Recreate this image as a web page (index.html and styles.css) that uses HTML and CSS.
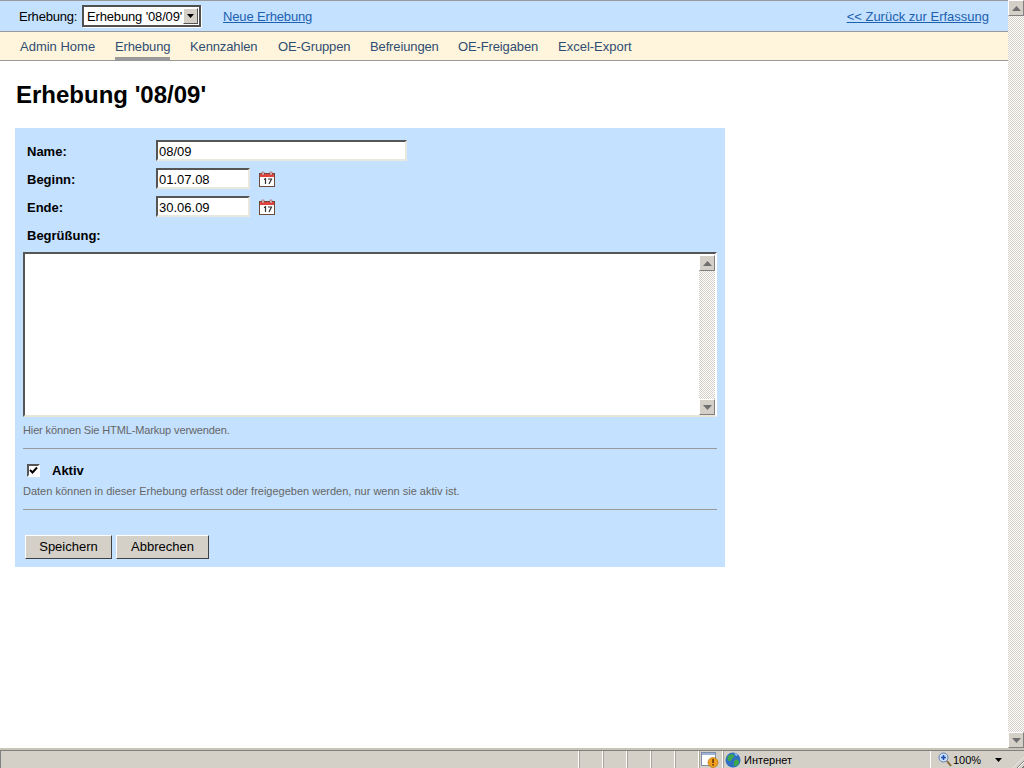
FILE: index.html
```html
<!DOCTYPE html>
<html lang="de">
<head>
<meta charset="utf-8">
<title>Erhebung</title>
<link rel="stylesheet" href="styles.css">
</head>
<body>
<div class="window">
  <div class="viewport">
    <main class="page">
      <div class="topbar">
        <span class="topbar-label">Erhebung:</span>
        <div class="select"><span class="select-text">Erhebung '08/09'</span><span class="select-btn"><svg width="8" height="4" viewBox="0 0 8 4"><path d="M0 0h7L3.500 4z" fill="#000"/></svg></span></div>
        <a class="link new-link" href="#">Neue Erhebung</a>
        <a class="link back-link" href="#">&lt;&lt; Zurück zur Erfassung</a>
      </div>
      <nav class="tabs">
        <a class="tab" href="#">Admin Home</a>
        <a class="tab active" href="#">Erhebung</a>
        <a class="tab" href="#">Kennzahlen</a>
        <a class="tab" href="#">OE-Gruppen</a>
        <a class="tab" href="#">Befreiungen</a>
        <a class="tab" href="#">OE-Freigaben</a>
        <a class="tab" href="#">Excel-Export</a>
      </nav>
      <h1 class="title">Erhebung '08/09'</h1>
      <form class="panel">
        <div class="row row-first">
          <label class="label">Name:</label>
          <input class="input input-name" type="text" value="08/09">
        </div>
        <div class="row">
          <label class="label">Beginn:</label>
          <input class="input input-date" type="text" value="01.07.08">
          <svg class="cal" width="16" height="16" viewBox="0 0 16 16"><use href="#cal-icon"/></svg>
        </div>
        <div class="row">
          <label class="label">Ende:</label>
          <input class="input input-date" type="text" value="30.06.09">
          <svg class="cal" width="16" height="16" viewBox="0 0 16 16"><use href="#cal-icon"/></svg>
        </div>
        <div class="row"><label class="label">Begrüßung:</label></div>
        <div class="textarea">
          <div class="textarea-body"></div>
          <div class="sb">
            <span class="sb-btn"><svg width="9" height="5" viewBox="0 0 9 5"><path d="M4.500 0L9 5H0z" fill="#6f6f6f"/></svg></span>
            <span class="sb-track"></span>
            <span class="sb-btn"><svg width="9" height="5" viewBox="0 0 9 5"><path d="M0 0h9L4.500 5z" fill="#6f6f6f"/></svg></span>
          </div>
        </div>
        <p class="hint hint-html">Hier können Sie HTML-Markup verwenden.</p>
        <hr class="rule">
        <div class="check-row">
          <span class="checkbox"><svg width="9" height="9" viewBox="0 0 9 9"><path d="M1 4l2.500 2.500L8 1.500" fill="none" stroke="#000" stroke-width="2"/></svg></span>
          <label class="check-label">Aktiv</label>
        </div>
        <p class="hint hint-active">Daten können in dieser Erhebung erfasst oder freigegeben werden, nur wenn sie aktiv ist.</p>
        <hr class="rule">
        <div class="buttons">
          <button class="btn btn-save" type="button">Speichern</button>
          <button class="btn btn-cancel" type="button">Abbrechen</button>
        </div>
      </form>
    </main>
    <div class="sb sb-page">
      <span class="sb-btn"><svg width="9" height="5" viewBox="0 0 9 5"><path d="M4.500 0L9 5H0z" fill="#6f6f6f"/></svg></span>
      <span class="sb-track"></span>
      <span class="sb-btn"><svg width="9" height="5" viewBox="0 0 9 5"><path d="M0 0h9L4.500 5z" fill="#6f6f6f"/></svg></span>
    </div>
  </div>
  <footer class="status">
    <div class="cell cell-main"></div>
    <div class="cell cell-s"></div>
    <div class="cell cell-s"></div>
    <div class="cell cell-s"></div>
    <div class="cell cell-s"></div>
    <div class="cell cell-s"></div>
    <div class="cell cell-blocked">
      <svg width="20" height="17" viewBox="0 0 20 17"><rect x="1.500" y="1.500" width="14" height="13" fill="#fff" stroke="#7f8ea8"/><rect x="2" y="2" width="13" height="2" fill="#9db4d8"/><circle cx="13" cy="11.500" r="5" fill="#f0a020" stroke="#b06a00" stroke-width=".6"/><rect x="12.300" y="8" width="1.500" height="4" fill="#5a2c00"/><rect x="12.300" y="13" width="1.500" height="1.500" fill="#5a2c00"/></svg>
    </div>
    <div class="cell cell-zone">
      <svg width="16" height="16" viewBox="0 0 16 16"><circle cx="8" cy="8" r="7.500" fill="#2e6fc4"/><path d="M3 4c2-2 5-2 6-1s-1 3-2 4-1 3-3 2-2-3-1-5zM10 8c2-1 4 0 4 2s-2 4-4 4-1-2-1-3 0-2 1-3z" fill="#3fa84a"/><path d="M9 1c2 0 3 1 4 2l-2 1z" fill="#8fc8f0"/></svg>
      <span class="zone-text">Интернет</span>
    </div>
    <div class="cell-zoom">
      <svg width="14" height="15" viewBox="0 0 14 15"><circle cx="5.500" cy="5.500" r="4.500" fill="#cfe2fa" stroke="#5c7fb0"/><path d="M3 5.500h5M5.500 3v5" stroke="#1a4fb0" stroke-width="1.600"/><path d="M9 9l4 5" stroke="#8a6a3a" stroke-width="2"/></svg>
      <span class="zoom-text">100%</span>
      <svg class="zoom-arrow" width="7" height="4" viewBox="0 0 7 4"><path d="M0 0h7L3.500 4z" fill="#000"/></svg>
    </div>
    <div class="grip"></div>
  </footer>
</div>
<svg class="defs" width="0" height="0">
  <symbol id="cal-icon" viewBox="0 0 16 16">
    <rect x="0.500" y="2.500" width="15" height="13" fill="#fff" stroke="#6b4a3a"/>
    <rect x="1" y="3" width="14" height="3" fill="#e0453f"/>
    <rect x="3" y="1" width="2" height="3" fill="#d9d9d9" stroke="#a33" stroke-width=".5"/>
    <rect x="11" y="1" width="2" height="3" fill="#d9d9d9" stroke="#a33" stroke-width=".5"/>
    <path d="M5 8.500l1.500-.8V13M9 8h3.500L10 13" fill="none" stroke="#333" stroke-width="1.200"/>
  </symbol>
</svg>
</body>
</html>
```
FILE: styles.css
```css
* { box-sizing: border-box; }
html, body { margin: 0; height: 100%; overflow: hidden; }
body { font-family: "Liberation Sans", Arial, sans-serif; font-size: 13px; color: #000; background: #fff; }
.defs { position: absolute; }
.window { display: flex; flex-direction: column; height: 768px; }
.viewport { flex: 1; display: flex; min-height: 0; }
.page { flex: 1; min-width: 0; }

.topbar { height: 32px; display: flex; align-items: center; padding: 0 19px; background: #c4e1ff; border-top: 1px solid #999; border-bottom: 1px solid #999; }
.topbar-label { width: 63px; letter-spacing: -.2px; flex: none; }
.select { width: 119px; height: 22px; display: flex; align-items: center; background: #fff; border: 2px solid #505050; box-shadow: 1px 1px 0 #fff; padding: 0 1px 0 3px; letter-spacing: -.15px; }
.select-text { flex: 1; white-space: nowrap; overflow: hidden; }
.select-btn { width: 15px; height: 16px; flex: none; display: flex; align-items: center; justify-content: center; background: #d4d0c8; border: 1px solid; border-color: #fff #555 #555 #fff; }
.link { color: #2060b0; text-decoration: underline; }
.new-link { margin-left: 22px; letter-spacing: -.15px; }
.back-link { margin-left: auto; }

.tabs { height: 29px; display: grid; grid-template-columns: 75px 55px 68px 72px 68px 80px 75px; gap: 20px; justify-content: start; padding: 0 0 0 20px; background: #fff5dc; border-bottom: 1px solid #999; letter-spacing: -.13px; }
.tab { height: 28px; line-height: 30px; color: #2f4d73; text-decoration: none; white-space: nowrap; }
.tab.active { border-bottom: 3px solid #999; }
.tab:first-child, .tab:last-child { letter-spacing: 0; }

.title { margin: 20px 0 19px 16px; font-size: 24px; line-height: 28px; font-weight: bold; }
.panel { width: 710px; margin-left: 15px; padding: 0 8px 8px 8px; height: 439px; background: #c4e1ff; display: flex; flex-direction: column; }
.row { height: 28px; display: flex; align-items: center; padding-left: 4px; flex: none; }
.row-first { margin-top: 9px; }
.label { width: 129px; font-weight: bold; }
.input { height: 21px; margin-top: -1px; padding: 2px 1px 0; border: 2px solid; border-color: #555 #e8e8e0 #e8e8e0 #555; background: #fff; font: 13px "Liberation Sans", Arial, sans-serif; color: #000; }
.input-name { width: 251px; }
.input-date { width: 94px; }
.cal { margin-left: 9px; }

.textarea { height: 165px; width: 694px; margin-top: 3px; flex: none; display: flex; padding-top: 1px; background: #fff; border: 2px solid; border-color: #555 #fff #e8e4d8 #555; }
.textarea-body { flex: 1; }
.sb { width: 16px; display: flex; flex-direction: column; flex: none; }
.sb-btn { height: 16px; flex: none; display: flex; align-items: center; justify-content: center; background: #d4d0c8; border: 1px solid; border-color: #fff #808080 #808080 #fff; }
.sb-track { flex: 1; background: conic-gradient(#fff 25%, #d4d0c8 0 50%, #fff 0 75%, #d4d0c8 0) 0 0 / 2px 2px; }

.hint { margin: 0; font-size: 11px; line-height: 12px; color: #666; }
.hint-html { margin-top: 7px; letter-spacing: -.13px; }
.hint-active { margin-top: 5px; }
.rule { width: 694px; margin: 0; height: 1px; border: 0; background: #999; flex: none; }
.hint-html + .rule { margin-top: 12px; }
.hint-active + .rule { margin-top: 12px; }
.check-row { display: flex; align-items: center; height: 20px; margin-top: 11px; padding-left: 4px; flex: none; }
.checkbox { width: 13px; height: 13px; display: flex; align-items: center; justify-content: center; background: #fff; border: 2px solid; border-color: #555 #fff #fff #555; }
.check-label { margin-left: 12px; font-weight: bold; }
.buttons { margin-top: 25px; padding-left: 2px; display: flex; gap: 4px; }
.btn { height: 24px; padding: 0 0 2px; background: #d4d0c8; border: 1px solid; border-color: #fff #404040 #404040 #fff; font: 13px "Liberation Sans", Arial, sans-serif; color: #000; }
.btn-save { width: 87px; }
.btn-cancel { width: 93px; }

.status { height: 20px; flex: none; display: flex; background: #d4d0c8; border-top: 2px solid #c8c4b8; box-shadow: inset 0 1px 0 #808080; font-size: 11px; }
.cell { height: 17px; margin-top: 1px; border-right: 1px solid #fff; border-left: 1px solid #a8a498; display: flex; align-items: center; }
.cell-main { width: 579px; border-left: 1px solid #808080; }
.cell-s { width: 24px; }
.cell-blocked { width: 24px; }
.cell-zone { width: 208px; padding-left: 1px; gap: 3px; }
.cell-zoom { width: 72px; height: 17px; margin: 1px 0 0 2px; padding-left: 5px; gap: 1px; display: flex; align-items: center; }
.zoom-arrow { margin-left: 13px; }
.grip { width: 11px; height: 11px; margin: 7px 0 0 auto; clip-path: polygon(100% 0, 100% 100%, 0 100%); background: repeating-linear-gradient(135deg, #d4d0c8 0 2px, #808080 2px 3px, #fff 3px 4px); }
```
